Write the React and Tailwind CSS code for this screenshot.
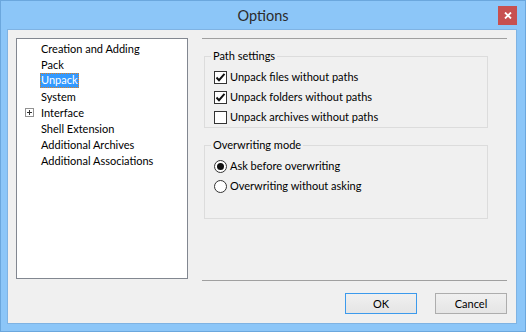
import React from 'react';

const treeItems = [
  { label: 'Creation and Adding' },
  { label: 'Pack' },
  { label: 'Unpack', selected: true },
  { label: 'System' },
  { label: 'Interface', expandable: true },
  { label: 'Shell Extension' },
  { label: 'Additional Archives' },
  { label: 'Additional Associations' },
];

const Checkbox = ({ checked, label }) => (
  <div className="flex items-center h-[20px]">
    <span className="w-[13px] h-[13px] border border-[#333] bg-white flex items-center justify-center shrink-0">
      {checked && (
        <svg width="11" height="11" viewBox="0 0 11 11">
          <path d="M1.5 5.5 L4 8.2 L9.5 1.8" fill="none" stroke="#111" strokeWidth="1.9" />
        </svg>
      )}
    </span>
    <span className="ml-[3px]">{label}</span>
  </div>
);

const Radio = ({ checked, label }) => (
  <div className="flex items-center h-[20px]">
    <span className="w-[13px] h-[13px] rounded-full border border-[#333] bg-white flex items-center justify-center shrink-0">
      {checked && <span className="w-[7px] h-[7px] rounded-full bg-[#111]" />}
    </span>
    <span className="ml-[3px]">{label}</span>
  </div>
);

const GroupBox = ({ title, className, children }) => (
  <div className={`relative border border-[#dcdcdc] ml-[2px] mr-[19px] ${className}`}>
    <span className="absolute -top-[9px] left-[6px] bg-[#f0f0f0] px-[2px] leading-[16px]">{title}</span>
    {children}
  </div>
);

export default function App() {
  return (
    <div
      className="w-[526px] h-[332px] bg-[#8cc6f8] border border-[#6ba7dd] flex flex-col text-[11px] text-black"
      style={{ fontFamily: 'Lato, "Noto Sans", sans-serif' }}
    >
      {/* Title bar */}
      <div className="h-[28px] flex items-center relative shrink-0">
        <div className="flex-1 text-center text-[14.5px] text-[#2b2b2b] pt-[1px]">Options</div>
        <button className="absolute right-[8px] top-[5px] w-[19px] h-[19px] bg-[#c75050] flex items-center justify-center">
          <svg width="8" height="7" viewBox="0 0 8 7">
            <path d="M1 0.5 L7 6.5 M7 0.5 L1 6.5" stroke="white" strokeWidth="1.8" />
          </svg>
        </button>
      </div>

      {/* Client area */}
      <div className="ml-[6px] w-[510px] h-[295px] border border-[#7fb3e3] bg-[#f0f0f0] flex pt-[8px] pl-[8px] pr-[9px] pb-[9px]">
        {/* Tree */}
        <div className="w-[172px] h-[241px] border border-[#828790] bg-white pt-[1px] shrink-0">
          {treeItems.map((item) => (
            <div key={item.label} className="h-[16px] flex items-center relative">
              {item.expandable && (
                <span className="absolute left-[8px] top-[4px] w-[9px] h-[9px] border border-[#919191] bg-white flex items-center justify-center">
                  <svg width="7" height="7" viewBox="0 0 7 7">
                    <path d="M1 3.5 H6 M3.5 1 V6" stroke="#333" strokeWidth="1" />
                  </svg>
                </span>
              )}
              <span
                className={
                  item.selected
                    ? 'ml-[23px] px-[1px] h-[15px] leading-[14px] bg-[#3399ff] text-white outline outline-1 outline-dotted outline-[#e08020] -outline-offset-1'
                    : 'ml-[24px] leading-[15px]'
                }
              >
                {item.label}
              </span>
            </div>
          ))}
        </div>

        {/* Right side */}
        <div className="ml-[14px] flex-1 flex flex-col">
          <div className="border-t border-[#a0a0a0]" />

          <GroupBox title="Path settings" className="mt-[17px] h-[72px] pt-[10px] pl-[9px]">
            <Checkbox checked label="Unpack files without paths" />
            <Checkbox checked label="Unpack folders without paths" />
            <Checkbox label="Unpack archives without paths" />
          </GroupBox>

          <GroupBox title="Overwriting mode" className="mt-[17px] h-[74px] pt-[10px] pl-[9px]">
            <Radio checked label="Ask before overwriting" />
            <Radio label="Overwriting without asking" />
          </GroupBox>

          <div className="flex-1" />
          <div className="border-t border-[#a0a0a0]" />

          <div className="mt-[12px] flex justify-end gap-[18px]">
            <button className="w-[72px] h-[21px] border border-[#3c9aec] bg-gradient-to-b from-[#f0f0f0] to-[#e5e5e5] leading-none">
              OK
            </button>
            <button className="w-[72px] h-[21px] border border-[#adadad] bg-gradient-to-b from-[#f0f0f0] to-[#e5e5e5] leading-none">
              Cancel
            </button>
          </div>
        </div>
      </div>
    </div>
  );
}
